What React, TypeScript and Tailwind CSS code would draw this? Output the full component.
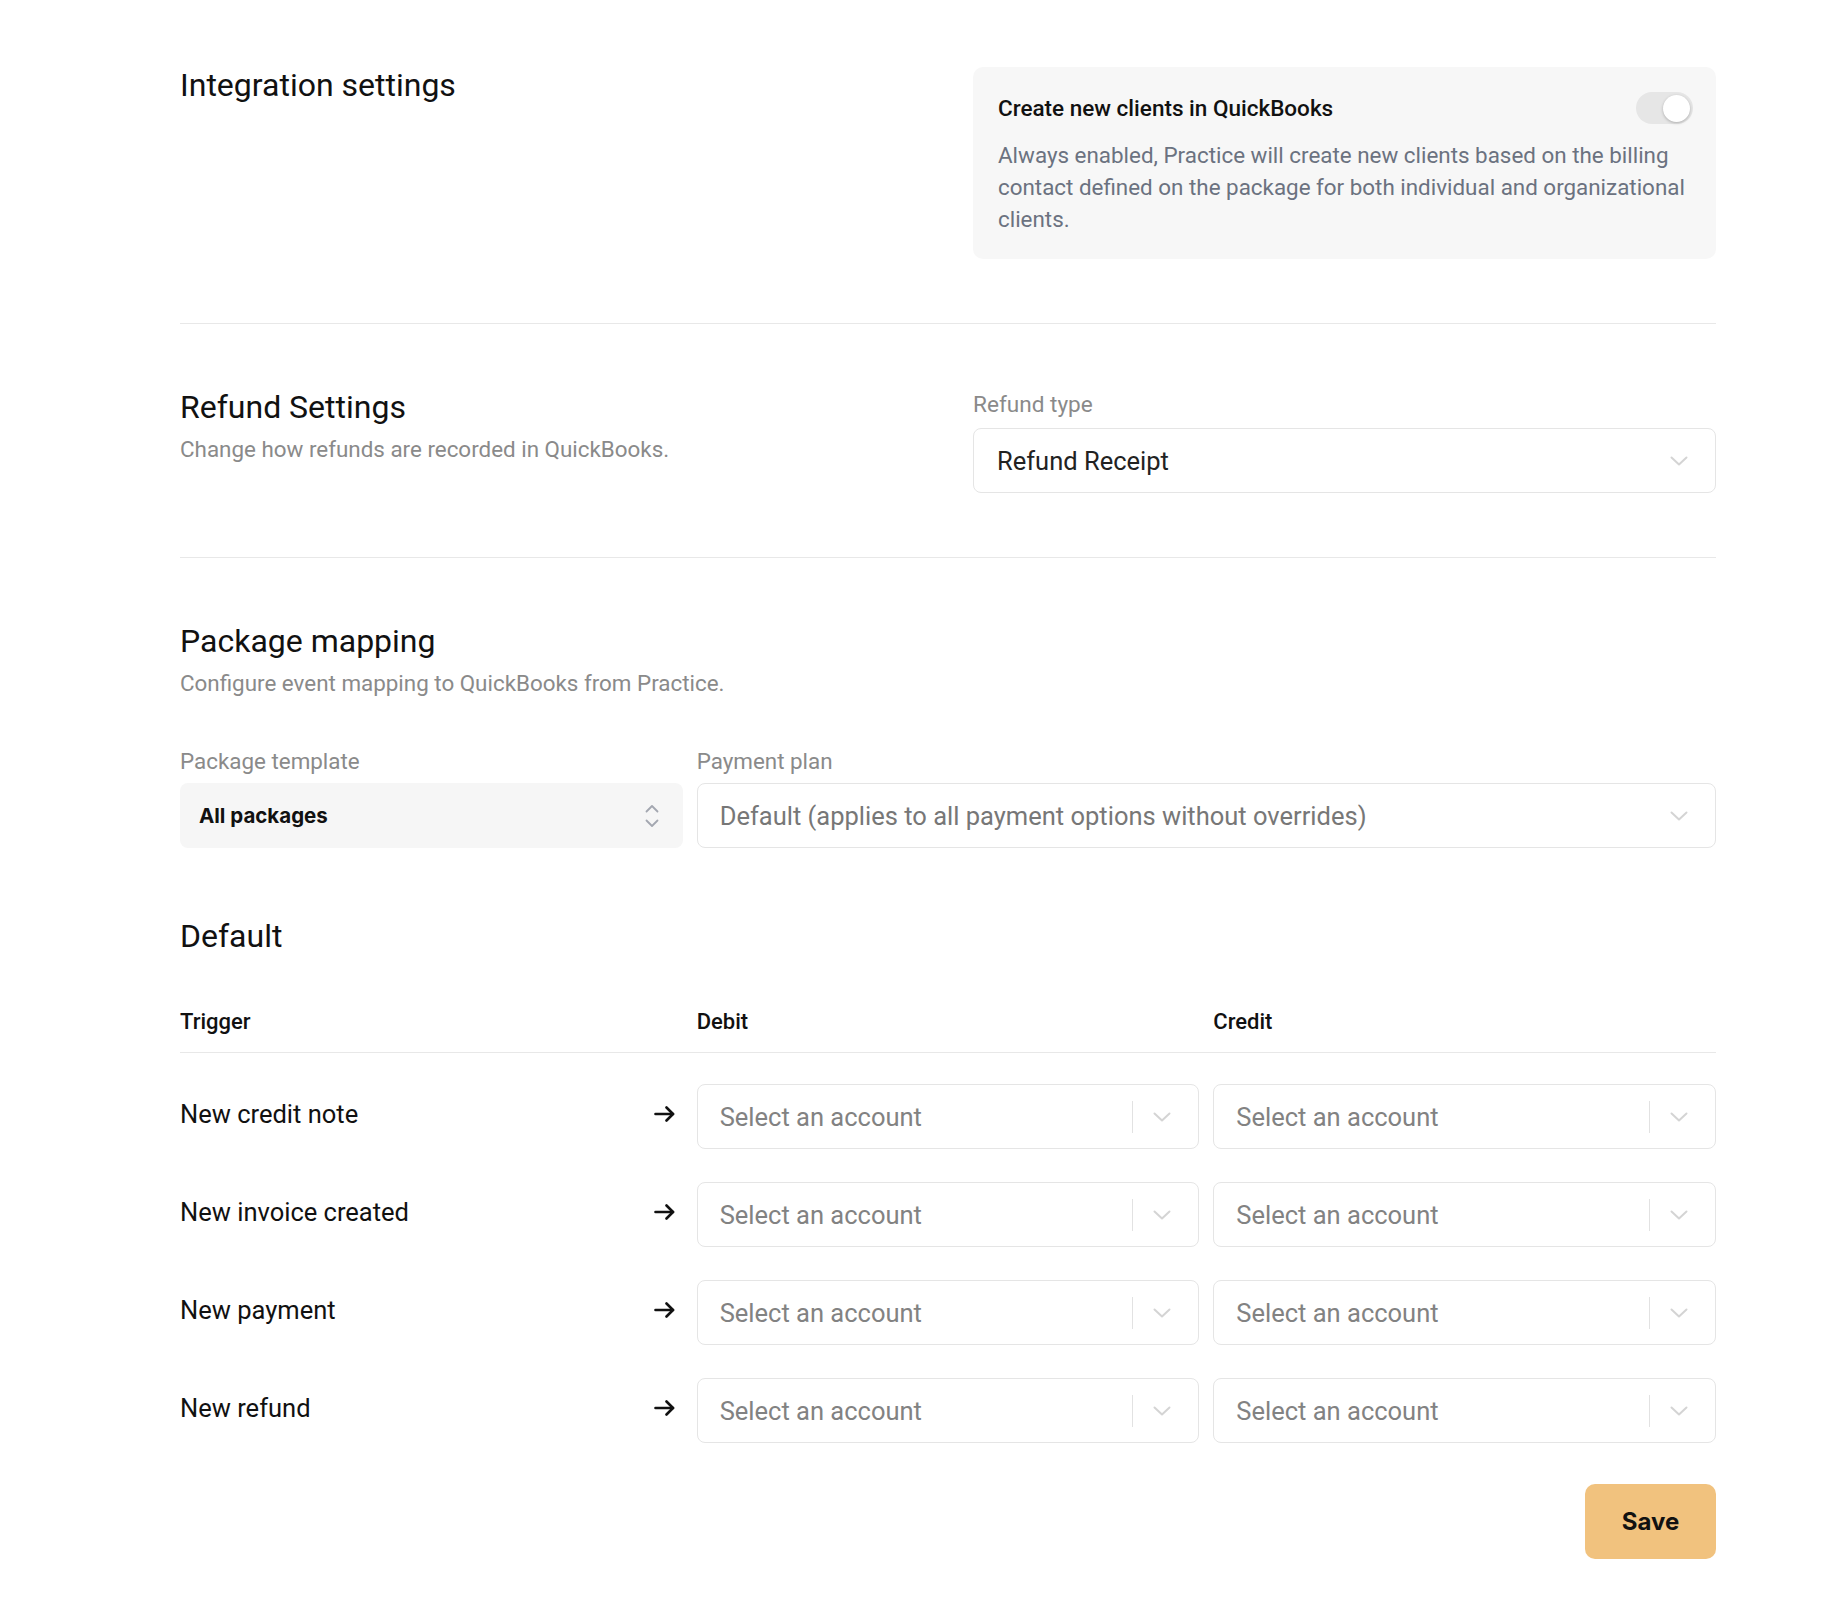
import React from "react";

const Chevron = ({ color = "#d4d4d4" }: { color?: string }) => (
  <svg width="18" height="10" viewBox="0 0 18 10" fill="none">
    <polyline points="1.5,1.5 9,8.5 16.5,1.5" stroke={color} strokeWidth="2" strokeLinecap="round" strokeLinejoin="round" />
  </svg>
);

const UpDown = () => (
  <svg width="16" height="26" viewBox="0 0 16 26" fill="none">
    <polyline points="2.5,8.5 8,3 13.5,8.5" stroke="#a3a7b0" strokeWidth="1.8" strokeLinecap="round" strokeLinejoin="round" />
    <polyline points="2.5,17.5 8,23 13.5,17.5" stroke="#a3a7b0" strokeWidth="1.8" strokeLinecap="round" strokeLinejoin="round" />
  </svg>
);

const Arrow = () => (
  <svg width="21" height="16" viewBox="0 0 21 16" fill="none">
    <path d="M1.5 8H19" stroke="#111" strokeWidth="2.6" strokeLinecap="round" />
    <path d="M12.5 1.5L19 8L12.5 14.5" stroke="#111" strokeWidth="2.6" strokeLinecap="round" strokeLinejoin="round" />
  </svg>
);

const AccountSelect = () => (
  <div className="flex h-[65px] items-center rounded-[8px] border border-[#e5e5e5] bg-white pl-[22px]">
    <span className="flex-1 text-[25.5px] leading-[30px] text-[#828282]">Select an account</span>
    <div className="h-[32px] w-px bg-[#e2e2e2]" />
    <div className="ml-[19px] mr-[26px] flex w-[20px] justify-center">
      <Chevron />
    </div>
  </div>
);

const rows = ["New credit note", "New invoice created", "New payment", "New refund"];

export default function App() {
  return (
    <div className="min-h-screen bg-white text-[#111]" style={{ fontFamily: "Roboto, 'Liberation Sans', sans-serif" }}>
      <div className="ml-[180px] w-[1536px] pt-[67px] pb-[59px]">
        {/* Integration settings */}
        <div className="grid grid-cols-2 gap-[50px] border-b border-[#e8e8e8] pb-[64px]">
          <h2 className="mt-[2px] text-[32px] leading-[32px] text-[#111]">Integration settings</h2>
          <div className="rounded-[10px] bg-[#f7f7f7] pt-[26px] pb-[24px] pl-[25px] pr-[20px]">
            <div className="flex h-[30px] items-center justify-between pr-[3px]">
              <span className="text-[22.5px] font-medium leading-[30px] text-[#111]">Create new clients in QuickBooks</span>
              <div className="flex h-[32px] w-[57px] items-center justify-end rounded-full bg-[#e6e6e6] pr-[3px]">
                <div className="h-[27px] w-[27px] rounded-full bg-white shadow-[0_1px_3px_rgba(0,0,0,0.25)]" />
              </div>
            </div>
            <p className="mt-[16px] text-[22.4px] leading-[32px] text-[#6b7280]">
              Always enabled, Practice will create new clients based on the billing contact defined on the package for both individual and organizational clients.
            </p>
          </div>
        </div>

        {/* Refund settings */}
        <div className="grid grid-cols-2 gap-[50px] border-b border-[#e8e8e8] pt-[67px] pb-[64px]">
          <div>
            <h2 className="text-[32px] leading-[32px] text-[#111]">Refund Settings</h2>
            <p className="mt-[12px] text-[22.4px] leading-[28px] text-[#8a8a8a]">Change how refunds are recorded in QuickBooks.</p>
          </div>
          <div>
            <div className="mb-[9px] text-[22.6px] leading-[28px] text-[#8a8a8a]">Refund type</div>
            <div className="flex h-[65px] items-center justify-between rounded-[8px] border border-[#e5e5e5] bg-white pl-[23px] pr-[27px]">
              <span className="text-[25.5px] leading-[30px] text-[#222]">Refund Receipt</span>
              <Chevron />
            </div>
          </div>
        </div>

        {/* Package mapping */}
        <div className="pt-[67px]">
          <h2 className="text-[32px] leading-[32px] text-[#111]">Package mapping</h2>
          <p className="mt-[12px] text-[22.4px] leading-[28px] text-[#8a8a8a]">Configure event mapping to QuickBooks from Practice.</p>

          <div className="mt-[50px] grid grid-cols-3 gap-x-[14px]">
            <div>
              <div className="mb-[8px] text-[22.4px] leading-[28px] text-[#8a8a8a]">Package template</div>
              <div className="flex h-[65px] items-center justify-between rounded-[8px] bg-[#f6f6f6] pl-[19px] pr-[23px]">
                <span className="text-[20.5px] font-bold leading-[28px] text-[#111]" style={{ fontFamily: "Inter, 'Liberation Sans', sans-serif" }}>
                  All packages
                </span>
                <UpDown />
              </div>
            </div>
            <div className="col-span-2">
              <div className="mb-[8px] text-[22.4px] leading-[28px] text-[#8a8a8a]">Payment plan</div>
              <div className="flex h-[65px] items-center justify-between rounded-[8px] border border-[#e5e5e5] bg-white pl-[22px] pr-[27px]">
                <span className="text-[25.5px] leading-[30px] text-[#777]">Default (applies to all payment options without overrides)</span>
                <Chevron />
              </div>
            </div>
          </div>

          <h2 className="mt-[72px] text-[32px] leading-[32px] text-[#111]">Default</h2>

          <div className="mt-[56px] grid grid-cols-3 gap-x-[14px] border-b border-[#e8e8e8] pb-[16px]">
            <div className="text-[22px] font-medium leading-[28px]">Trigger</div>
            <div className="text-[22px] font-medium leading-[28px]">Debit</div>
            <div className="text-[22px] font-medium leading-[28px]">Credit</div>
          </div>

          <div className="mt-[31px] flex flex-col gap-[33px]">
            {rows.map((r) => (
              <div key={r} className="grid grid-cols-3 items-center gap-x-[14px]">
                <div className="flex items-center justify-between pr-[8px] pb-[6px]">
                  <span className="text-[25.5px] leading-[30px] text-[#111]">{r}</span>
                  <Arrow />
                </div>
                <AccountSelect />
                <AccountSelect />
              </div>
            ))}
          </div>

          <div className="mt-[41px] flex justify-end">
            <button
              className="h-[75px] w-[131px] rounded-[10px] bg-[#f1c27e] text-[24px] font-bold text-[#111]"
              style={{ fontFamily: "Inter, 'Liberation Sans', sans-serif" }}
            >
              Save
            </button>
          </div>
        </div>
      </div>
    </div>
  );
}
